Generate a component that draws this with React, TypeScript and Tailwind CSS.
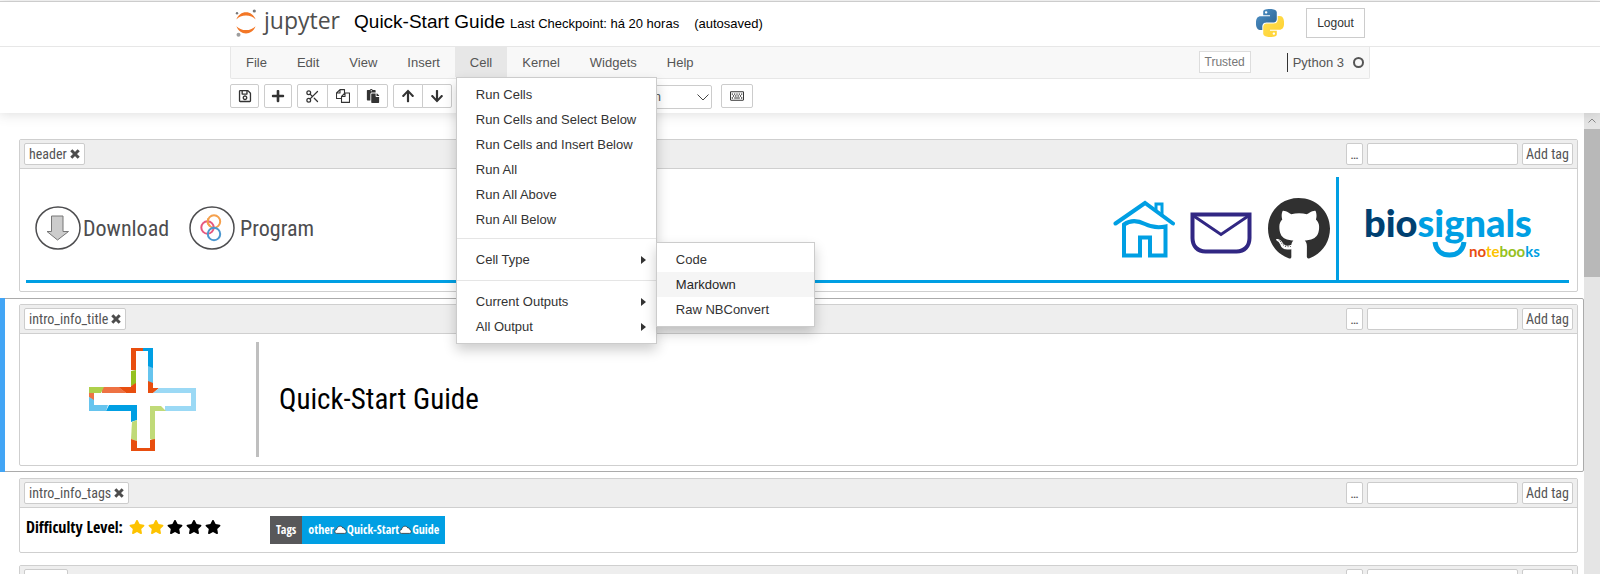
import type { ReactNode } from "react";
import {
  FaArrowDown,
  FaArrowUp,
  FaForward,
  FaGithub,
  FaPaste,
  FaPlay,
  FaPlus,
  FaRedo,
  FaRegKeyboard,
  FaRegSave,
  FaStar,
  FaStop,
} from "react-icons/fa";
import { Scissors } from "lucide-react";

const SANS = "font-['Liberation_Sans',Arial,sans-serif]";
const CONDENSED = "font-['Roboto_Condensed',Roboto,sans-serif]";
const CONDENSED_BOLD = "font-['Open_Sans_Condensed','Open_Sans',sans-serif] font-bold";

function JupyterMark() {
  return (
    <svg viewBox="0 0 24 28" className="h-7 w-6" aria-hidden="true">
      <path d="M2.400 10.400C4 5.900 7.800 3.200 12 3.200s8 2.700 9.600 7.200C19.400 8 15.900 6.500 12 6.500S4.600 8 2.400 10.400z" fill="#f37726" />
      <path d="M2.400 17.200C4 21.700 7.800 24.400 12 24.400s8-2.700 9.600-7.200C19.400 19.600 15.900 21.100 12 21.100S4.600 19.600 2.400 17.200z" fill="#f37726" />
      <circle cx="20.300" cy="2" r="1.600" fill="#767677" />
      <circle cx="3" cy="4.200" r="1.200" fill="#767677" />
      <circle cx="4.500" cy="25.700" r="2" fill="#9e9e9e" />
    </svg>
  );
}

function PythonLogo() {
  return (
    <svg viewBox="0 0 24 24" className="size-7" aria-hidden="true">
      <defs>
        <linearGradient id="py-blue" x1="0" y1="0" x2="1" y2="1">
          <stop offset="0" stopColor="#4f94cb" />
          <stop offset="1" stopColor="#2b5f8c" />
        </linearGradient>
        <linearGradient id="py-yellow" x1="0" y1="0" x2="1" y2="1">
          <stop offset="0" stopColor="#ffe052" />
          <stop offset="1" stopColor="#ffd030" />
        </linearGradient>
      </defs>
      <path
        fill="url(#py-blue)"
        d="M14.25.18l.9.2.73.26.59.3.45.32.34.34.25.34.16.33.1.3.04.26.02.2-.01.13V8.5l-.05.63-.13.55-.21.46-.26.38-.3.31-.33.25-.35.19-.35.14-.33.1-.3.07-.26.04-.21.02H8.77l-.69.05-.59.14-.5.22-.41.27-.33.32-.27.35-.2.36-.15.37-.1.35-.07.32-.04.27-.02.21v3.06H3.17l-.21-.03-.28-.07-.32-.12-.35-.18-.36-.26-.36-.36-.35-.46-.32-.59-.28-.73-.21-.88-.14-1.05-.05-1.23.06-1.22.16-1.04.24-.87.32-.71.36-.57.4-.44.42-.33.42-.24.4-.16.36-.1.32-.05.24-.01h.16l.06.01h8.16v-.83H6.18l-.01-2.75-.02-.37.05-.34.11-.31.17-.28.25-.26.31-.23.38-.2.44-.18.51-.15.58-.12.64-.1.71-.06.77-.04.84-.02 1.27.05zm-6.3 1.98l-.23.33-.08.41.08.41.23.34.33.22.41.09.41-.09.33-.22.23-.34.08-.41-.08-.41-.23-.33-.33-.22-.41-.09-.41.09z"
      />
      <path
        fill="url(#py-yellow)"
        d="M21.040 6.110l.28.06.32.12.35.18.36.27.36.35.35.47.32.59.28.73.21.88.14 1.04.05 1.23-.06 1.23-.16 1.04-.24.86-.32.71-.36.57-.4.45-.42.33-.42.24-.4.16-.36.09-.32.05-.24.02-.16-.01h-8.220v.82h5.840l.01 2.760.02.36-.05.34-.11.31-.17.29-.25.25-.31.24-.38.2-.44.17-.51.15-.58.13-.64.09-.71.07-.77.04-.84.01-1.270-.04-1.070-.14-.9-.2-.73-.25-.59-.3-.45-.33-.34-.34-.25-.34-.16-.33-.1-.3-.04-.25-.02-.2.01-.13v-5.340l.05-.64.13-.54.21-.46.26-.38.3-.32.33-.24.35-.2.35-.14.33-.1.3-.06.26-.04.21-.02.13-.01h5.840l.69-.05.59-.14.5-.21.41-.28.33-.32.27-.35.2-.36.15-.36.1-.35.07-.32.04-.28.02-.21V6.070h2.090l.14.01zm-6.470 14.250l-.23.33-.08.41.08.41.23.33.33.23.41.08.41-.08.33-.23.23-.33.08-.41-.08-.41-.23-.33-.33-.23-.41-.08-.41.08z"
      />
    </svg>
  );
}

function CopyIcon() {
  return (
    <svg viewBox="0 0 14 14" className="size-[14px]" fill="none" stroke="currentColor" strokeWidth="1.1" strokeLinejoin="round" aria-hidden="true">
      <path d="M5.500 9.500h-5V4L4 .6h4.500v3.500M4 .6V4H.5" />
      <path d="M9 4h4.500v9.400h-8V7.500zM9 4v3.500H5.500" />
    </svg>
  );
}

function BoldCross() {
  return (
    <svg viewBox="0 0 10 10" className="size-[10px]" aria-hidden="true">
      <path d="M1.300 1.300l7.400 7.400M8.700 1.300L1.300 8.700" stroke="#4d4d4d" strokeWidth="3" />
    </svg>
  );
}

function DownloadIcon() {
  return (
    <svg viewBox="0 0 46 44" className="h-11 w-[46px]" aria-hidden="true">
      <ellipse cx="23" cy="22" rx="22" ry="21" fill="#fff" stroke="#4d4d4f" strokeWidth="1.500" />
      <path d="M16.500 10h11.500v15.500h5.500L22.500 34 12 25.500h4.500z" fill="#ccc" stroke="#777" strokeWidth="1" />
    </svg>
  );
}

function ProgramIcon() {
  return (
    <svg viewBox="0 0 46 44" className="h-11 w-[46px]" fill="none" strokeWidth="2" aria-hidden="true">
      <ellipse cx="23" cy="22" rx="22" ry="21" stroke="#4d4d4f" strokeWidth="1.500" />
      <circle cx="25" cy="15.500" r="6.200" stroke="#f5a04c" />
      <circle cx="18.500" cy="21.500" r="6.200" stroke="#e6587f" />
      <circle cx="25" cy="28" r="6.200" stroke="#4b97cf" />
      <path d="M19.500 12.500a6.200 6.200 0 0 0 1.500 7.600" stroke="#f5a04c" />
    </svg>
  );
}

function HomeIcon() {
  return (
    <svg viewBox="0 0 62 58" className="h-[58px] w-[62px]" fill="none" stroke="#009fe3" strokeWidth="4" strokeLinecap="round" aria-hidden="true">
      <path d="M2.500 23.500L32 3l28 20.500" strokeLinejoin="miter" />
      <path d="M43 10V4h6v11" strokeWidth="3" />
      <path d="M11 55.500V24.500c7-5 14-4 21-.5s13 4 20.500 2.500v29H37V37.500H27v18z" strokeLinejoin="miter" />
    </svg>
  );
}

function MailIcon() {
  return (
    <svg viewBox="0 0 62 42" className="h-[42px] w-[62px]" fill="none" stroke="#312783" strokeWidth="4" aria-hidden="true">
      <path d="M2.500 2.500h57V26c0 8-5 13.500-13 13.500h-31C7.500 39.500 2.500 34 2.500 26z" />
      <path d="M3 3.500l28 19 28-19" strokeWidth="3" />
    </svg>
  );
}

function BiosignalsLogo() {
  return (
    <svg viewBox="0 0 180 66" className="h-[66px] w-[180px] overflow-visible font-['Lato',sans-serif]" fill="none" role="img" aria-label="biosignals notebooks">
      <path d="M69 47c1 8 6 13 14.500 13S97 55 98 47" stroke="#009fe3" strokeWidth="5" />
      <text x="-2" y="42" fontSize="38" fontWeight="900" fill="#009fe3">
        <tspan fill="#004071">bio</tspan>signals
      </text>
      <text x="103" y="62" fontSize="15" fontWeight="700" fill="#009fe3">
        <tspan fill="#e84e0f">no</tspan><tspan fill="#fdc300">te</tspan><tspan fill="#95c11f">boo</tspan>ks
      </text>
    </svg>
  );
}

function CrossLogo() {
  return (
    <svg viewBox="0 0 107 103" className="h-[103px] w-[107px]" aria-hidden="true">
      <path d="M42 0h13v3h-8v19h-5z" fill="#e84e0f" />
      <path d="M54 0h10v20h-5V3h-5z" fill="#009fe3" />
      <path d="M59 18l5 2v15h-5z" fill="#66c4ee" />
      <path d="M42 23l5-1v14l-5 2z" fill="#95c11f" />
      <path d="M42 38l5-3v10H37l-8-6h13z" fill="#e84e0f" />
      <path d="M13 39h17l7 6H13z" fill="#ee7243" />
      <path d="M0 39h15l-3 6H5L0 50z" fill="#aed04b" />
      <path d="M0 45h5v8l-5-4z" fill="#ee7243" />
      <path d="M0 49l5 3v5h14l-2 6H0z" fill="#66c4ee" />
      <path d="M20 57h28v15l-6 2V63H17z" fill="#009fe3" />
      <path d="M59 33l5 2v5h6l-6 5h-5z" fill="#e84e0f" />
      <path d="M70 40h37v23H76v-5h26V45H64z" fill="#9bd9f5" />
      <path d="M61 58h11l5 5H66v30l-5-2z" fill="#c0da78" />
      <path d="M43 74l5-2v21l-6-2z" fill="#c0da78" />
      <path d="M42 91l6 2v7h13v-8l5-1v12H42z" fill="#e84e0f" />
    </svg>
  );
}

function Cloud() {
  return (
    <svg viewBox="0 0 13 9" className="h-[9px] w-[13px]" aria-hidden="true">
      <path d="M2.500 8.400C.2 8.400 .2 4.600 2.600 4.500 3 1 7.500 0 8.800 3 10.500 2.700 11 4 10.900 4.800 12.900 5 12.700 8.400 10.700 8.400z" fill="#fff" stroke="#333" strokeWidth="0.8" />
    </svg>
  );
}

function ToolButton({ label, first, last, className, children }: { label: string; first?: boolean; last?: boolean; className: string; children: ReactNode }) {
  return (
    <button
      type="button"
      aria-label={label}
      className={`flex h-6 items-center justify-center border border-[#ccc] bg-white text-sm text-[#333] ${first ? "rounded-l-xs" : "-ml-px"} ${last ? "rounded-r-xs" : ""} ${className}`}
    >
      {children}
    </button>
  );
}

function MenuItem({ children, arrow, active }: { children: ReactNode; arrow?: boolean; active?: boolean }) {
  return (
    <button type="button" className={`flex h-[25px] w-full items-center justify-between pr-[10px] pl-[19px] text-left whitespace-nowrap ${active ? "bg-[#f5f5f5] text-[#262626]" : "text-[#333]"}`}>
      {children}
      {arrow && (
        <svg viewBox="0 0 5 8" className="h-2 w-[5px]" fill="currentColor" aria-hidden="true">
          <path d="M0 0l5 4-5 4z" />
        </svg>
      )}
    </button>
  );
}

function CellMenu() {
  return (
    <div className="absolute top-full left-px z-20 w-[201px] border border-[#ccc] bg-white py-1 shadow-[0_6px_12px_rgba(0,0,0,0.2)]">
      <MenuItem>Run Cells</MenuItem>
      <MenuItem>Run Cells and Select Below</MenuItem>
      <MenuItem>Run Cells and Insert Below</MenuItem>
      <MenuItem>Run All</MenuItem>
      <MenuItem>Run All Above</MenuItem>
      <MenuItem>Run All Below</MenuItem>
      <hr className="mt-1.5 mb-2 border-[#e5e5e5]" />
      <div className="relative">
        <MenuItem arrow>Cell Type</MenuItem>
        <div className="absolute -top-[5px] left-full w-[159px] border border-[#ccc] bg-white py-1 shadow-[0_6px_12px_rgba(0,0,0,0.2)]">
          <MenuItem>Code</MenuItem>
          <MenuItem active>Markdown</MenuItem>
          <MenuItem>Raw NBConvert</MenuItem>
        </div>
      </div>
      <hr className="my-2 border-[#e5e5e5]" />
      <MenuItem arrow>Current Outputs</MenuItem>
      <MenuItem arrow>All Output</MenuItem>
    </div>
  );
}

const MENUS = ["File", "Edit", "View", "Insert", "Cell", "Kernel", "Widgets", "Help"];

function Header() {
  return (
    <header className={`relative z-10 bg-white pb-1 shadow-[0_0_12px_1px_rgba(87,87,87,0.2)] ${SANS}`}>
      <div className="border-t border-b border-t-[#ccc] border-b-[#e7e7e7]">
        <div className="mx-auto flex h-11 w-full max-w-[1140px] items-center pr-[5px]">
          <a href="#" className="flex items-center gap-1.5 pb-0.5 pl-1 text-[#4e4e4e]" aria-label="jupyter">
            <JupyterMark />
            <span className="pb-1.5 font-['Open_Sans',sans-serif] text-[23px] leading-7">jupyter</span>
          </a>
          <h1 className="ml-3.5 flex items-baseline gap-[5px] pb-0.5 text-black">
            <span className="text-[19px] leading-6">Quick-Start Guide</span>
            <span className="text-[13px] leading-6">Last Checkpoint: há 20 horas</span>
            <span className="ml-2.5 text-[13px] leading-6">(autosaved)</span>
          </h1>
          <div className="ml-auto flex items-center gap-[22px] pb-0.5">
            <PythonLogo />
            <button type="button" className="h-[30px] w-[59px] border border-[#ccc] bg-white text-xs text-[#333]">
              Logout
            </button>
          </div>
        </div>
      </div>
      <div className="mx-auto w-full max-w-[1140px]">
        <nav className="flex h-8 items-start rounded-b-xs border border-t-0 border-[#e7e7e7] bg-[#f8f8f8] text-[13px] text-[#555]">
          {MENUS.map((name) => (
            <div key={name} className="relative">
              <button type="button" className={`h-[30px] px-[15px] pt-px ${name === "Cell" ? "bg-[#e7e7e7]" : ""}`}>
                {name}
              </button>
              {name === "Cell" && <CellMenu />}
            </div>
          ))}
          <div className="ml-auto flex h-[30px] items-center pr-[5px]">
            <button type="button" className="h-[22px] w-[52px] border border-[#ddd] bg-white text-xs text-[#777]">
              Trusted
            </button>
            <div className="ml-9 flex items-center border-l border-[#333] pl-[5px] leading-[19px]">
              Python 3
              <span className="ml-[9px] size-[11px] rounded-full border-2 border-[#555]" />
            </div>
          </div>
        </nav>
        <div className="flex items-center gap-[5px] pt-[5px]">
          <ToolButton label="Save" first last className="w-[29px]"><FaRegSave /></ToolButton>
          <ToolButton label="Insert cell below" first last className="w-7"><FaPlus /></ToolButton>
          <div className="flex">
            <ToolButton label="Cut" first className="w-[31px]"><Scissors className="size-[15px]" strokeWidth={2} /></ToolButton>
            <ToolButton label="Copy" className="w-[31px]"><CopyIcon /></ToolButton>
            <ToolButton label="Paste" last className="w-[31px]"><FaPaste /></ToolButton>
          </div>
          <div className="flex">
            <ToolButton label="Move up" first className="w-[30px]"><FaArrowUp /></ToolButton>
            <ToolButton label="Move down" last className="w-[30px]"><FaArrowDown /></ToolButton>
          </div>
          <div className="flex">
            <ToolButton label="Run" first className="w-[49px]"><FaPlay className="size-2.5" /></ToolButton>
            <ToolButton label="Interrupt" className="w-7"><FaStop className="size-2.5" /></ToolButton>
            <ToolButton label="Restart" className="w-7"><FaRedo className="size-3" /></ToolButton>
            <ToolButton label="Restart and run all" last className="w-7"><FaForward className="size-3" /></ToolButton>
          </div>
          <div className="relative">
            <select aria-label="Cell type" defaultValue="Markdown" className="h-6 w-[120px] appearance-none rounded-xs border border-[#ccc] bg-white pl-2 text-[13px] text-[#555]">
              <option>Code</option>
              <option>Markdown</option>
              <option>Raw NBConvert</option>
            </select>
            <svg viewBox="0 0 12 7" className="pointer-events-none absolute top-[10px] right-[3px] h-[7px] w-3" fill="none" stroke="#444" aria-hidden="true">
              <path d="M.5.5L6 6l5.500-5.500" />
            </svg>
          </div>
          <div className="ml-1">
            <ToolButton label="Command palette" first last className="w-8"><FaRegKeyboard /></ToolButton>
          </div>
        </div>
      </div>
    </header>
  );
}

function Cell({ tag, selected, children }: { tag: string; selected?: boolean; children?: ReactNode }) {
  return (
    <section className={`flex border ${selected ? "rounded-xs border-[#ababab]" : "border-transparent"}`}>
      {selected && <div className="-my-px -ml-px w-[5px] shrink-0 bg-[#42a5f5]" />}
      <div className={`my-[5px] mr-[5px] min-w-0 flex-1 rounded-xs border border-[#cfcfcf] ${selected ? "ml-3.5" : "ml-[18px]"}`}>
        <div className={`flex h-[29px] items-center border-b border-[#cfcfcf] bg-[#eee] px-1 text-sm text-[#555] ${CONDENSED}`}>
          <span className="flex h-[22px] items-center gap-[3px] rounded-xs border border-[#ccc] bg-white px-1">
            {tag}
            <button type="button" aria-label={`Remove ${tag}`}><BoldCross /></button>
          </span>
          <div className="ml-auto flex gap-1">
            <button type="button" className="h-[22px] w-[17px] rounded-xs border border-[#ccc] bg-white leading-5">…</button>
            <input aria-label={`New tag for ${tag}`} className="h-[22px] w-[151px] rounded-xs border border-[#ccc] bg-white px-1" />
            <button type="button" className="h-[22px] w-[51px] rounded-xs border border-[#ccc] bg-white leading-5">Add tag</button>
          </div>
        </div>
        {children}
      </div>
    </section>
  );
}

function TopBanner() {
  return (
    <div className="px-1.5 pt-2 pb-2">
      <div className="mr-0.5 flex items-stretch border-b-3 border-[#009fe3]">
        <div className={`flex h-[103px] flex-1 items-center pl-[9px] text-[22px] text-[#4d4d4f] ${CONDENSED}`}>
          <a href="#" className="flex items-center gap-0.5"><DownloadIcon />Download</a>
          <a href="#" className="ml-5 flex items-center gap-[5px]"><ProgramIcon />Program</a>
        </div>
        <div className="flex items-center gap-[15px] pt-0.5 pr-[5px]">
          <a href="#" aria-label="Home"><HomeIcon /></a>
          <a href="#" aria-label="Contact" className="pt-2"><MailIcon /></a>
          <a href="#" aria-label="GitHub"><FaGithub className="size-16 text-[#303030]" /></a>
        </div>
        <div className="flex w-[233px] items-center border-l-3 border-[#009fe3] pl-[27px]">
          <BiosignalsLogo />
        </div>
      </div>
    </div>
  );
}

export default function App() {
  return (
    <div className="flex h-screen flex-col overflow-hidden bg-white pt-px">
      <Header />
      <main className="flex min-h-0 flex-1">
        <div className="min-w-0 flex-1 overflow-hidden pt-5">
          <Cell tag="header"><TopBanner /></Cell>
          <Cell tag="intro_info_title" selected>
            <div className="flex px-1.5 py-2">
              <div className="flex w-[230px] items-center justify-center pl-0.5">
                <CrossLogo />
              </div>
              <h2 className={`flex h-[115px] items-center border-l-3 border-[#bfbfbf] pl-5 text-[29px] text-black ${CONDENSED}`}>Quick-Start Guide</h2>
            </div>
          </Cell>
          <Cell tag="intro_info_tags">
            <div className="flex items-start px-1.5 py-2">
              <div className={`flex w-[244px] items-center gap-1.5 text-base leading-[22px] text-black ${CONDENSED_BOLD}`}>
                Difficulty Level:
                <span className="flex gap-[3px]" role="img" aria-label="2 of 5 stars">
                  {[0, 1, 2, 3, 4].map((n) => (
                    <FaStar key={n} className={`size-4 ${n < 2 ? "text-[#fdc300]" : "text-black"}`} />
                  ))}
                </span>
              </div>
              <div className={`flex h-7 text-xs text-white ${CONDENSED_BOLD}`}>
                <span className="flex items-center bg-[#58585a] px-1.5">Tags</span>
                <span className="flex items-center bg-[#009fe3] px-1.5">
                  other<Cloud />Quick-Start<Cloud />Guide
                </span>
              </div>
            </div>
          </Cell>
          <Cell tag="test"><div className="h-20" /></Cell>
        </div>
        <div className="flex w-4 flex-col bg-[#e5e5e5]" aria-hidden="true">
          <div className="flex h-4 items-center justify-center">
            <svg viewBox="0 0 8 5" className="h-[5px] w-2" fill="none" stroke="#888">
              <path d="M.5 4.500L4 1l3.500 3.500" />
            </svg>
          </div>
          <div className="h-[148px] bg-[#b8b8b8]" />
        </div>
      </main>
    </div>
  );
}
